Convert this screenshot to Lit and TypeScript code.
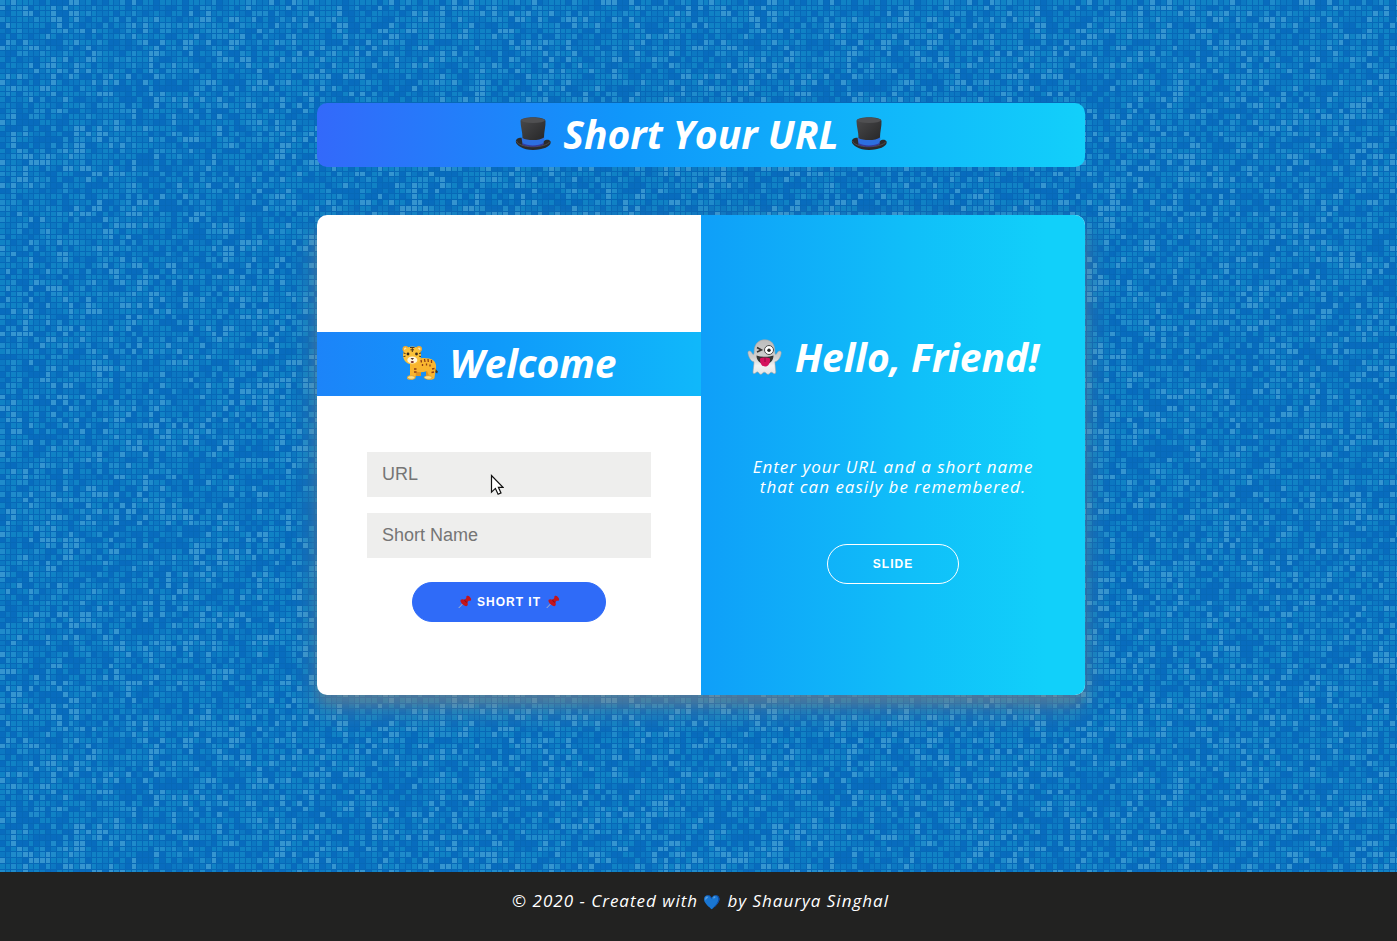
import { LitElement, html, svg, css } from "lit";
import { customElement } from "lit/decorators.js";

const CELLS = 122;
const PITCH = 5.72;
const TILE = Math.round(CELLS * PITCH);
const SHADES = ["#086cbe", "#0c78c2", "#1082c5", "#1f8bcb", "#3595d0"];

function randomizer(seed: number) {
  let s = seed;
  return () => {
    s = (s + 0x6d2b79f5) | 0;
    let t = Math.imul(s ^ (s >>> 15), 1 | s);
    t = (t + Math.imul(t ^ (t >>> 7), 61 | t)) ^ t;
    return ((t ^ (t >>> 14)) >>> 0) / 4294967296;
  };
}

/* One path per shade, each holding every mosaic square of that shade. */
function mosaicPaths(): string[] {
  const rnd = randomizer(2020);
  const paths = SHADES.map(() => "");
  const edge = (i: number) => Math.round(i * PITCH);
  for (let row = 0; row < CELLS; row++) {
    for (let col = 0; col < CELLS; col++) {
      const a = (col / CELLS) * Math.PI * 2;
      const b = (row / CELLS) * Math.PI * 2;
      const wave =
        Math.sin(a * 5 + b * 3) * Math.cos(b * 6 - a * 2) * 0.07 +
        Math.sin(a * 13 + b * 7) * Math.cos(b * 12) * 0.06;
      const v = rnd() + wave;
      const shade = v < 0.23 ? 0 : v < 0.44 ? 1 : v < 0.73 ? 2 : v < 0.87 ? 3 : 4;
      const x = edge(col);
      const y = edge(row);
      const w = edge(col + 1) - x - 1;
      const h = edge(row + 1) - y - 1;
      paths[shade] += `M${x} ${y}h${w}v${h}h-${w}z`;
    }
  }
  return paths;
}

const PATHS = mosaicPaths();

@customElement("mosaic-backdrop")
export class MosaicBackdrop extends LitElement {
  static styles = css`
    :host {
      display: block;
    }
    .canvas {
      display: block;
      width: 100%;
      height: 100%;
    }
  `;
  render() {
    return html`<svg class="canvas" aria-hidden="true" shape-rendering="crispEdges">
      <defs>
        <pattern id="mosaic" width=${TILE} height=${TILE} patternUnits="userSpaceOnUse">
          <rect width=${TILE} height=${TILE} fill="#0768b7"></rect>
          ${PATHS.map((d, i) => svg`<path d=${d} fill=${SHADES[i]}></path>`)}
        </pattern>
      </defs>
      <rect width="100%" height="100%" fill="url(#mosaic)"></rect>
    </svg>`;
  }
}

const topHat = () => html`<svg class="icon" viewBox="0 0 36 36" aria-hidden="true">
  <defs>
    <linearGradient id="felt" x1="0" y1="0" x2="1" y2="1">
      <stop offset="0" stop-color="#4b4b4d"></stop>
      <stop offset="1" stop-color="#262627"></stop>
    </linearGradient>
  </defs>
  <path
    d="M1 24.5c-1.5 3.5 6 9.500 17 9.500s19-4.500 17.500-8.500c-1-2.500-5-2-6.500-.5l-22-3c-2-.8-5.200-.3-6 2.500z"
    fill="#2b2b2c"
  ></path>
  <path d="M1.500 25c1 3.500 8 5.800 16 5.800s15.500-2 17.500-5.200" fill="none" stroke="#4e4e50" stroke-width="1"></path>
  <path d="M6.500 21.500l1 6.500c5 2.800 16 3 21-.5l1-6z" fill="#2c6fe0"></path>
  <path d="M7 27c6 3.200 16 3.200 22-.2l-.3 1.700c-6 3-15 3-21.300.2z" fill="#383a9c"></path>
  <path
    d="M5.500 5c0-5 25-5 25 0 .3 5-1.500 11-1.500 16.500-4 3.300-17 3.300-21.500.5C7.500 16 5.500 10 5.500 5z"
    fill="url(#felt)"
  ></path>
  <ellipse cx="18" cy="4.300" rx="12" ry="2.600" fill="#505052"></ellipse>
</svg>`;

const tiger = () => html`<svg class="icon" viewBox="0 0 36 36" aria-hidden="true">
  <path d="M31 20c2 3 1 6 4.500 7.500" fill="none" stroke="#3d3527" stroke-width="2.200"></path>
  <path d="M30 21c1 2 .8 4 2.500 5.500" fill="none" stroke="#f5b02e" stroke-width="2.200"></path>
  <path d="M11 22h8v9H11zM24 22h8v9h-8z" fill="#dd9425"></path>
  <path
    d="M8 16c6-3.500 19-4 23.500-.5 3 2.500 3 7 2 10l-1 7.500c-.2 2-7.500 2.300-8.500.8-.8-1.300.5-3 3-3.300l-2-4.500c-4 1.500-8 1.500-11 .5l-.5 6.500c-.3 2-7.300 2.300-8.300.8-.8-1.500.5-3 2.800-3.500z"
    fill="#f9b52f"
  ></path>
  <path
    d="M5.500 32c1.500-1.800 6-1.800 7.500.2.500 2.500-7.500 3-7.500-.2zM22 32c2-1.800 6.500-1.800 8 .2.500 2.500-8 3-8-.2z"
    fill="#fce08a"
    stroke="#c98e2a"
    stroke-width=".5"
  ></path>
  <circle cx="3.500" cy="4" r="3" fill="#f4aa2b"></circle>
  <circle cx="17" cy="4" r="3" fill="#f4aa2b"></circle>
  <circle cx="3.500" cy="4" r="1.500" fill="#fde7ad"></circle>
  <circle cx="17" cy="4" r="1.500" fill="#fde7ad"></circle>
  <path
    d="M10.300 1.500c5.500 0 8.700 3.500 8.700 8.500 0 5.500-3.500 9.500-8.700 9.500S1 15.500 1 10c0-5 3.800-8.500 9.300-8.500z"
    fill="#fac13a"
  ></path>
  <ellipse cx="10.300" cy="15" rx="5" ry="3.600" fill="#fff6dc"></ellipse>
  <path
    d="M8 2.500h4.500M8.500 4.800h3.500M10.300 2v5M1.500 8l2 .5M1.500 11.500l2-.3M19 8l-2 .5M19 11.500l-2-.3"
    stroke="#4b3520"
    stroke-width="1"
  ></path>
  <circle cx="6" cy="9" r="1.400" fill="#392c20"></circle>
  <circle cx="14.500" cy="9" r="1.400" fill="#392c20"></circle>
  <path d="M8.500 13h3.600l-1.800 2z" fill="#53342a"></path>
  <ellipse cx="10.300" cy="17" rx="1.600" ry="1" fill="#7a2c28"></ellipse>
  <path
    d="M19 15l.5 2.500M22.500 14l.5 3M26 14l.3 3M29.500 15v3M20.500 19v2M24.500 18.500v2M28 19.500v2M12 24h2.500M12 27h2.500M30 24l2.500-.5M29.500 27.500l2.500-.5"
    stroke="#8c3d18"
    stroke-width="1.300"
  ></path>
</svg>`;

const ghost = () => html`<svg class="icon" viewBox="0 0 36 36" aria-hidden="true">
  <defs>
    <linearGradient id="sheet" x1="0" y1="0" x2="0" y2="1">
      <stop offset="0" stop-color="#bcbcbc"></stop>
      <stop offset=".5" stop-color="#cfcfcf"></stop>
      <stop offset=".75" stop-color="#f2f2f2"></stop>
      <stop offset="1" stop-color="#e3e3e3"></stop>
    </linearGradient>
  </defs>
  <path
    d="M18 .8c-7 0-10.800 5-10.800 11.500 0 1.700-.2 3.200-1 3.200-1.200 0-1.500-3.700-3.800-3.500-2 .2-1.500 2.500-1 4 1 3.500 3 6.500 5.600 6.700 0 4-.8 7.300-1 10.300-.1 2 1.800 2 3 .6 1.400-1.500 2.300-.4 3.200.8 1.100 1.300 2.300 1.200 3.300-.1 1.200-1.500 2.500-1.500 3.700 0 1.100 1.400 2.300 1.400 3.400.1 1.100-1.300 2-1.700 3.300-.5 1.300 1.200 3 1 2.900-1-.2-3-.9-6.400-.9-10.200 2.700-.3 4.900-3.200 5.900-6.700.4-1.500.9-3.800-1.100-4-2.300-.2-2.600 3.500-3.900 3.500-.8 0-1-1.500-1-3.200C27.800 5.800 25 .8 18 .8z"
    fill="url(#sheet)"
    stroke="#a5a5a5"
    stroke-width=".6"
  ></path>
  <path d="M10 8.500l4.500 2.500-4.500 2" fill="none" stroke="#333" stroke-width="1.500"></path>
  <circle cx="22" cy="11" r="4.500" fill="#fff" stroke="#4a4a4a" stroke-width="1"></circle>
  <circle cx="22" cy="11.200" r="1.700" fill="#222"></circle>
  <path d="M9.500 16.500c5 1.700 12 1.700 17 0 0 5-3.500 8.500-8.500 8.500s-8.500-3.500-8.500-8.500z" fill="#333"></path>
  <path d="M13 19.500c2.500-1.300 7.500-1.300 10 0 .3 4.500-1.500 8-5 8s-5.300-3.500-5-8z" fill="#d5125c"></path>
  <path d="M18 19v4" stroke="#8f0b3d" stroke-width="1"></path>
</svg>`;

const pin = () => html`<svg class="pin" viewBox="0 0 14 14" aria-hidden="true">
  <path d="M4.500 9L.7 13" stroke="#aab3c8" stroke-width="1"></path>
  <path
    d="M8.600 1.200c.8-.8 2.200-.3 3.300.8s1.700 2.600.9 3.400c-.6.500-1.300.4-1.900.1L9.300 7.200c.8 1.500.7 3-.3 3.800-1 .6-3.300-.5-4.700-2C2.800 7.600 2 5.600 2.700 4.800c.9-.9 2.500-.8 4-.1l1.700-1.600c-.3-.7-.3-1.400.2-1.900z"
    fill="#c5141c"
  ></path>
  <path d="M6.700 4.700c0 1.500 1 2.500 2.600 2.500" fill="none" stroke="#7d0d16" stroke-width=".9"></path>
</svg>`;

@customElement("app-root")
export class AppRoot extends LitElement {
  static styles = css`
    :host {
      display: flex;
      flex-direction: column;
      min-height: 100vh;
      position: relative;
      isolation: isolate;
      font-family: "Open Sans", "Noto Color Emoji", sans-serif;
      color: #fff;
    }
    * {
      box-sizing: border-box;
    }
    .backdrop {
      position: absolute;
      inset: 0;
      z-index: -1;
    }
    .main {
      flex: 1;
      display: flex;
      flex-direction: column;
      align-items: center;
      gap: 48px;
      padding: 103px 16px 48px 21px;
    }
    .heading {
      margin: 0;
      height: 64px;
      width: 100%;
      display: flex;
      align-items: center;
      justify-content: center;
      gap: 12px;
      font-size: 39px;
      font-weight: 700;
      font-style: italic;
      line-height: 60px;
      padding-bottom: 2px;
      white-space: nowrap;
    }
    .icon {
      width: 36px;
      height: 36px;
      flex: none;
    }
    .title {
      max-width: 768px;
      border-radius: 10px;
      background: linear-gradient(to right, #3369fa, #0f97fa 40%, #12d0fa);
    }
    .card {
      width: 100%;
      max-width: 768px;
      min-height: 480px;
      display: grid;
      grid-template-columns: 1fr 1fr;
      border-radius: 10px;
      overflow: hidden;
      background: #fff;
      box-shadow:
        0 14px 28px rgba(140, 140, 140, 0.4),
        0 10px 10px rgba(120, 120, 120, 0.3);
    }
    .form {
      display: flex;
      flex-direction: column;
      align-items: center;
      padding-top: 117px;
    }
    .welcome {
      background: linear-gradient(to right, #1c84f9, #0f99fa 45%, #10b8fa);
    }
    .fields {
      width: 100%;
      padding: 56px 50px 24px;
      display: grid;
      gap: 16px;
    }
    .field {
      position: relative;
      display: block;
    }
    .input {
      display: block;
      width: 100%;
      height: 45px;
      padding: 0 15px;
      border: 0;
      border-radius: 0;
      background: #eeeeed;
      color: #333;
      font: 18px "Liberation Sans", sans-serif;
    }
    .input::placeholder {
      color: #757575;
      opacity: 1;
    }
    .pointer {
      position: absolute;
      left: 123px;
      top: 22px;
      width: 14px;
      height: 22px;
    }
    .button {
      height: 40px;
      padding: 0 45px;
      border: 1px solid #2f6bf8;
      border-radius: 20px;
      background: #2f6bf8;
      color: #fff;
      display: flex;
      align-items: center;
      gap: 5px;
      font: bold 12px "Liberation Sans", sans-serif;
      letter-spacing: 1px;
      text-transform: uppercase;
    }
    .pin {
      width: 14px;
      height: 14px;
    }
    .ghost {
      border-color: #fff;
      background: transparent;
    }
    .panel {
      display: flex;
      flex-direction: column;
      align-items: center;
      padding: 111px 40px 0;
      background: linear-gradient(to right, #0f9ff9, #10bff9 55%, #11d0fa 90%);
    }
    .text {
      margin: 67px 0 47px;
      max-width: 300px;
      text-align: center;
      font-size: 17px;
      font-style: italic;
      line-height: 20px;
      letter-spacing: 1px;
    }
    .footer {
      min-height: 69px;
      padding: 19px 16px 30px 20px;
      background: #222221;
      text-align: center;
      font-size: 17px;
      font-style: italic;
      line-height: 20px;
      letter-spacing: 1px;
    }
    .heart {
      font: 14px "Noto Color Emoji", sans-serif;
    }
    .footer-text {
      margin: 0;
    }
  `;

  render() {
    return html`
      <mosaic-backdrop class="backdrop"></mosaic-backdrop>
      <main class="main">
        <h1 class="heading title">${topHat()}<span>Short Your URL</span>${topHat()}</h1>
        <section class="card">
          <form class="form" @submit=${(e: Event) => e.preventDefault()}>
            <h2 class="heading welcome">${tiger()}<span>Welcome</span></h2>
            <div class="fields">
              <label class="field">
                <input class="input" type="text" placeholder="URL" aria-label="URL" />
                <svg class="pointer" viewBox="0 0 14 22" aria-hidden="true">
                  <path
                    d="M1.500 1.500v16.600l3.900-3.700 2.700 5.800 2.900-1.300-2.600-5.600h4.600z"
                    fill="#fff"
                    stroke="#111"
                    stroke-width="1.200"
                  ></path>
                </svg>
              </label>
              <label class="field">
                <input class="input" type="text" placeholder="Short Name" aria-label="Short Name" />
              </label>
            </div>
            <button class="button" type="submit">${pin()}<span>Short it</span>${pin()}</button>
          </form>
          <div class="panel">
            <h2 class="heading">${ghost()}<span>Hello, Friend!</span></h2>
            <p class="text">Enter your URL and a short name that can easily be remembered.</p>
            <button class="button ghost" type="button">Slide</button>
          </div>
        </section>
      </main>
      <footer class="footer">
        <p class="footer-text">
          © 2020 - Created with <span class="heart">💙</span> by Shaurya Singhal
        </p>
      </footer>
    `;
  }
}
